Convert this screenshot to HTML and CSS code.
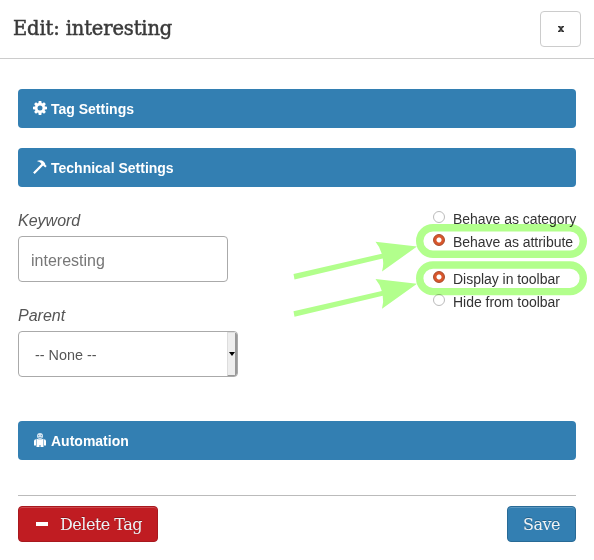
FILE: index.html
```html
<!DOCTYPE html>
<html lang="en">
<head>
<meta charset="utf-8">
<title>Edit: interesting</title>
<link rel="stylesheet" href="styles.css">
</head>
<body>
<div class="dialog">
  <header class="dialog-header">
    <h1 class="title"><span>Edit: interesting</span></h1>
    <button class="close" type="button" aria-label="Close"><svg width="6" height="6" viewBox="0 0 6 6"><path d="M0 0h2.600v1L3 1.600l.4-.6V0H6v1.200h-.7L4 2.900l1.400 1.900H6V6H3.400V5L3 4.300 2.600 5v1H0V4.800h.6L2 2.900.7 1.200H0z"/></svg></button>
  </header>
  <main class="content">
    <section class="panel first"><svg class="icon" width="14" height="14" viewBox="0 0 14 14"><g fill="#fff"><path d="M5.700 0h2.600l.5 3H5.200zM5.200 11h3.600l-.5 3H5.700z"/><path d="M5.700 0h2.600l.5 3H5.200zM5.200 11h3.600l-.5 3H5.700z" transform="rotate(45 7 7)"/><path d="M5.700 0h2.600l.5 3H5.200zM5.200 11h3.600l-.5 3H5.700z" transform="rotate(90 7 7)"/><path d="M5.700 0h2.600l.5 3H5.200zM5.200 11h3.600l-.5 3H5.700z" transform="rotate(135 7 7)"/></g><circle cx="7" cy="7" r="3.700" fill="none" stroke="#fff" stroke-width="2.400"/></svg><span>Tag Settings</span></section>
    <section class="panel"><svg class="icon" width="14" height="14" viewBox="0 0 14 14"><path d="M4.500.8Q8-.7 10.800 1.700L12 3.200l.4 1.700 1.300 1.200-1.400 1.400-2.200-2L1.700 14 .1 12.500 8.400 4.100 7.500 2.800Q6.200 1.500 4.500 1.500z" fill="#fff"/></svg><span>Technical Settings</span></section>
    <div class="settings">
      <div class="fields">
        <label class="label" for="keyword">Keyword</label>
        <input class="input" id="keyword" value="interesting">
        <div class="label parent">Parent</div>
        <div class="select"><span>-- None --</span><i class="spin"></i></div>
      </div>
      <div class="options">
        <div class="option"><i class="radio"></i><span>Behave as category</span></div>
        <div class="option"><i class="radio on"></i><span>Behave as attribute</span></div>
        <div class="option gap"><i class="radio on"></i><span>Display in toolbar</span></div>
        <div class="option"><i class="radio"></i><span>Hide from toolbar</span></div>
      </div>
    </div>
    <section class="panel"><svg class="icon" width="14" height="14" viewBox="0 0 14 14"><circle cx="7" cy="3" r="3" fill="#d5e6f2"/><path d="M5 2.500h1.200M7.800 2.500H9M5.300 4.200q1.700 1 3.400 0" stroke="#5d96be" stroke-width=".8" fill="none"/><path d="M3.500 5.800q3.500 1 7 0V14H7.500v-2h-1v2h-3zM1 8q0-1.600 2-1.800v6.300H1zM11 6.200q2 .2 2 1.800v4.500h-2z" fill="#fff"/></svg><span>Automation</span></section>
    <footer class="actions">
      <button class="btn danger" type="button"><i class="minus"></i><span>Delete Tag</span></button>
      <button class="btn save" type="button"><span>Save</span></button>
    </footer>
  </main>
  <svg class="callouts" width="594" height="560" viewBox="0 0 594 560">
    <g id="callout"><rect x="419.700" y="227.700" width="163.600" height="26.600" rx="13.300" fill="none" stroke="#b2ff8c" stroke-width="7.400"/><path d="M293.500 274l88.300-20.300Q380 247 375.500 241.700L417 246.500 382 271.500Q384 265 382.700 258.400L294.500 279.500z" fill="#b2ff8c"/></g>
    <use href="#callout" y="37.300"/>
  </svg>
</div>
</body>
</html>
```
FILE: styles.css
```css
* { box-sizing: border-box; }
body { margin: 0; background: #fff; color: #333; font: 14px/20px "Liberation Sans", Arial, sans-serif; }
.dialog { position: relative; width: 594px; height: 560px; overflow: hidden; background: #fff; }
.dialog-header { display: flex; justify-content: space-between; height: 59px; padding: 11px 13px 0; border-bottom: 1px solid #ccc; }
.title { margin: 5px 0 0; font: 400 19.500px/26px "DejaVu Serif", serif; letter-spacing: -.15px; color: #3a3a3a; -webkit-text-stroke: .5px #3a3a3a; }
.close { display: flex; align-items: center; justify-content: center; width: 41px; height: 36px; padding: 0; border: 1px solid #ccc; border-radius: 4px; background: #fff; color: #333; }
.close svg { fill: #333; }
.content { padding: 30px 18px 0; }
.panel { display: flex; align-items: center; gap: 4px; height: 39px; padding: 0 15px; border-radius: 4px; background: #337fb2; color: #fff; font-weight: 700; }
.first { margin-bottom: 20px; }
.icon { margin-top: -2px; }
.settings { display: flex; justify-content: space-between; height: 234px; padding-top: 22px; }
.fields { width: 220px; }
.label { display: block; height: 27px; line-height: 24px; font-size: 16px; font-style: italic; color: #555; }
.input { display: block; width: 210px; height: 46px; padding: 3px 12px 0; border: 1px solid #aaa; border-radius: 4px; font: 16px "Liberation Sans", Arial, sans-serif; color: #777; }
.parent { margin-top: 22px; }
.select { display: flex; justify-content: space-between; align-items: center; width: 220px; height: 46px; padding-left: 16px; border: 1px solid #aaa; border-radius: 4px; color: #555; font-size: 14.400px; overflow: hidden; }
.select span { padding-top: 1px; }
.spin { display: flex; align-items: center; justify-content: center; width: 10px; height: 45px; background: #eee; border: solid; border-width: 1px 2px 2px 1px; border-color: #ddd #999 #999 #ddd; }
.spin::after { content: ""; flex: none; border: 3px solid transparent; border-top: 4px solid #000; border-bottom: 0; }
.options { width: 143px; margin-top: -2px; letter-spacing: -.03px; white-space: nowrap; }
.option { display: flex; height: 23px; align-items: center; gap: 8px; }
.gap { margin-top: 14px; }
.radio { width: 12px; height: 12px; margin-top: -4px; border: 1px solid #bbb; border-radius: 50%; background: #fff; flex: none; }
.on { border: 1px solid #a84a2b; background: radial-gradient(circle, #fff 0 2px, #d9562b 3px 5px, #b9431f 6px); }
.actions { display: flex; justify-content: space-between; margin-top: 35px; padding-top: 10px; border-top: 1px solid #bbb; }
.btn { display: flex; align-items: center; height: 36px; padding: 0; border-radius: 4px; font: 16px/24px "DejaVu Serif", serif; letter-spacing: -.5px; color: #eef2f5; text-shadow: 0 -1px 0 rgba(0,0,0,.25); box-shadow: inset 0 1px 0 rgba(255,255,255,.2); white-space: nowrap; }
.btn span { padding-top: 2px; }
.danger { width: 140px; padding-left: 17px; border: 1px solid #a8181e; background: #c01c22; }
.minus { width: 12px; height: 4px; margin-right: 12px; background: #fff; }
.save { width: 69px; justify-content: center; border: 1px solid #286a96; background: #337fb2; }
.callouts { position: absolute; inset: 0; pointer-events: none; mix-blend-mode: multiply; }
```
